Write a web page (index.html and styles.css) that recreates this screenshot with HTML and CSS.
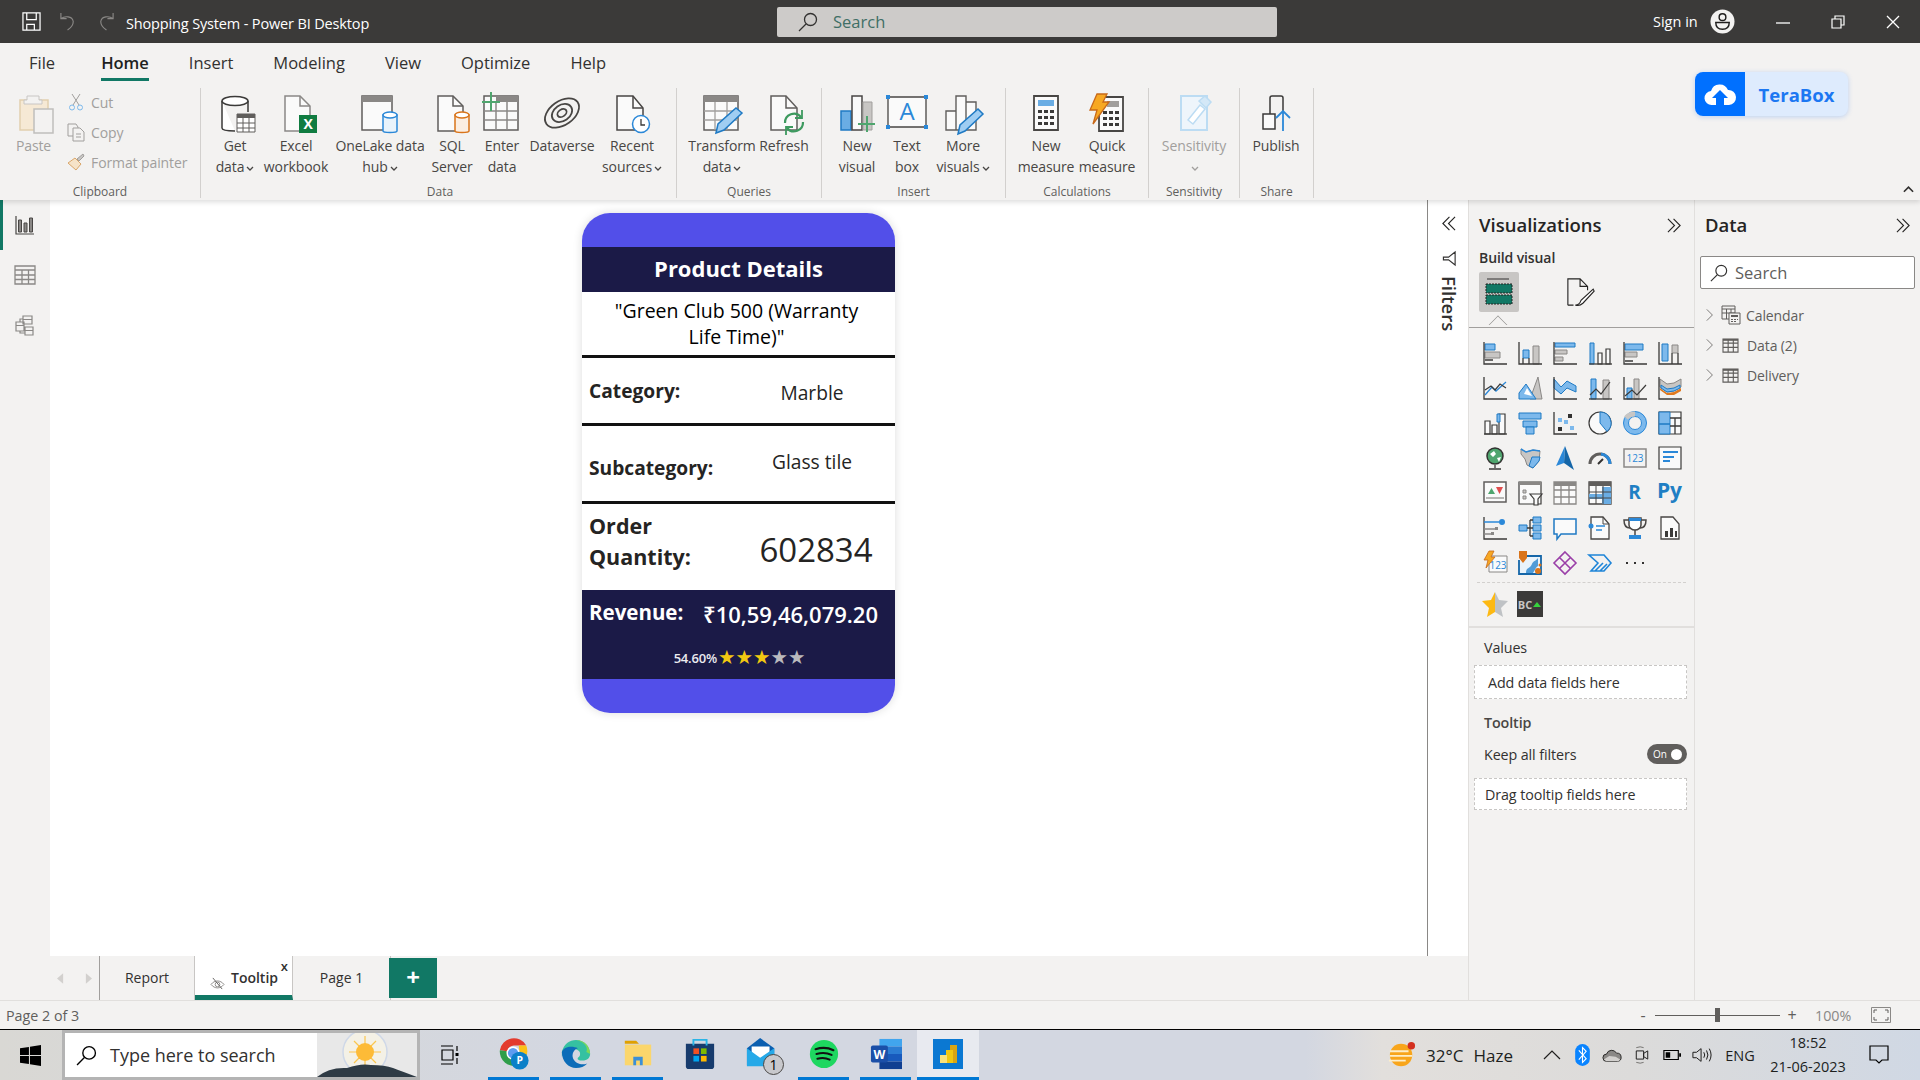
FILE: index.html
```html
<!DOCTYPE html>
<html lang="en">
<head>
    <meta charset="UTF-8">
    <meta name="viewport" content="width=device-width, initial-scale=1.0">
    <title>Shopping System - Power BI Desktop</title>
    <link rel="stylesheet" href="styles.css">
</head>
<body>
    <svg class="defs" width="0" height="0">
        <symbol id="i-caret" viewBox="0 0 8 6"><path d="M1 1l3 3 3-3" fill="none" stroke="currentColor" stroke-width="1.3"/></symbol>
        <symbol id="i-dbl" viewBox="0 0 16 16"><path d="M1 1l7 7-7 7M7 1l7 7-7 7" fill="none" stroke="#252423" stroke-width="1.2"/></symbol>
        <symbol id="i-right" viewBox="0 0 10 16"><path d="M1 1l7 7-7 7" fill="none" stroke="#605e5c" stroke-width="1"/></symbol>
        <symbol id="i-search" viewBox="0 0 20 20"><circle cx="12.5" cy="7.5" r="6" fill="none" stroke="currentColor" stroke-width="1.3"/><path d="M8 12l-7 7" stroke="currentColor" stroke-width="1.3"/></symbol>
        <symbol id="i-table" viewBox="0 0 18 16"><path d="M1 1h16v14H1zM1 5.500h16M1 10h16M6.500 1v14M12 1v14" fill="none" stroke="#605e5c" stroke-width="1.200"/><path d="M1 1h16v2H1z" fill="#605e5c"/></symbol>
    </svg>

    <header class="titlebar">
        <div class="quick">
            <svg class="quick-icon" viewBox="0 0 20 20"><path d="M1 1h18v18H1zM5 1v7h10V1M5 19v-6h8v6" fill="none" stroke="#fff" stroke-width="1.300"/></svg>
            <svg class="quick-icon" viewBox="0 0 20 20"><path d="M2 1v6h6M2 7c4-3 12-3 13 3 0 4-3 7-6 9" fill="none" stroke="#8a8886" stroke-width="1.200"/></svg>
            <svg class="quick-icon" viewBox="0 0 20 20"><path d="M18 1v6h-6M18 7c-4-3-12-3-13 3 0 4 3 7 6 9" fill="none" stroke="#8a8886" stroke-width="1.200"/></svg>
        </div>
        <div class="app-title">Shopping System - Power BI Desktop</div>
        <div class="top-search">
            <svg class="top-search-icon"><use href="#i-search"/></svg>
            <span>Search</span>
        </div>
        <div class="signin">Sign in</div>
        <svg class="avatar" viewBox="0 0 26 26"><circle cx="13" cy="13" r="12.500" fill="#f3f2f1"/><circle cx="13" cy="8.500" r="3.500" fill="none" stroke="#201f1e" stroke-width="1.500"/><path d="M6 14h14c0 5-3 7-7 7s-7-2-7-7z" fill="none" stroke="#201f1e" stroke-width="1.500"/></svg>
        <div class="winbtns">
            <svg class="winbtn" viewBox="0 0 14 14"><path d="M0 8h14" stroke="#fff" stroke-width="1.300"/></svg>
            <svg class="winbtn" viewBox="0 0 14 14"><path d="M1 4h9v9H1zM4 4V1h9v9h-3" fill="none" stroke="#fff" stroke-width="1.200"/></svg>
            <svg class="winbtn" viewBox="0 0 14 14"><path d="M1 1l12 12M13 1L1 13" stroke="#fff" stroke-width="1.300"/></svg>
        </div>
    </header>

    <section class="ribbon">
        <nav class="tabs">
            <span>File</span>
            <span class="tab-active">Home</span>
            <span>Insert</span>
            <span>Modeling</span>
            <span>View</span>
            <span>Optimize</span>
            <span>Help</span>
        </nav>
        <div class="groups">
            <div class="group g-clip">
                <div class="items">
                    <div class="item disabled">
                        <svg class="rb-icon" viewBox="0 0 40 40"><path d="M6 6h28v30H6z" fill="#f6e9d5" stroke="#e2cfae" stroke-width="1.500"/><path d="M13 6V2h12v4h3v4H10V6z" fill="#f3f2f1" stroke="#c8c6c4"/><path d="M20 15h19v24H20z" fill="#f3f2f1" stroke="#c0bebc" stroke-width="1.500"/></svg>
                        <span>Paste</span>
                    </div>
                    <div class="stack disabled">
                        <div class="stack-row"><svg class="stack-icon" viewBox="0 0 18 18"><path d="M5 1l7 11M13 1L6 12" stroke="#a19f9d" fill="none"/><circle cx="5" cy="14.500" r="2.500" fill="none" stroke="#7db9ec"/><circle cx="13" cy="14.500" r="2.500" fill="none" stroke="#7db9ec"/></svg>Cut</div>
                        <div class="stack-row"><svg class="stack-icon" viewBox="0 0 18 18"><path d="M1 1h8l2 3v9H1z" fill="none" stroke="#a19f9d"/><path d="M6 5h7l4 4v9H6z" fill="#f3f2f1" stroke="#a19f9d"/><path d="M9 11h5M9 14h5" stroke="#a19f9d"/></svg>Copy</div>
                        <div class="stack-row"><svg class="stack-icon" viewBox="0 0 18 18"><path d="M1 10l7-5 6 6-5 6z" fill="#f6e3c8" stroke="#d9a66a"/><path d="M10 6l6-5 1 2-5 5z" fill="#c8c6c4" stroke="#a19f9d"/></svg>Format painter</div>
                    </div>
                </div>
                <div class="group-name">Clipboard</div>
            </div>

            <div class="group g-data">
                <div class="items">
                    <div class="item">
                        <svg class="rb-icon" viewBox="0 0 40 40"><path d="M7 7v27c0 2 5 3 13 3M33 7v11" fill="#fff" stroke="#3b3a39" stroke-width="1.500"/><ellipse cx="20" cy="7" rx="13" ry="4.500" fill="#fff" stroke="#3b3a39" stroke-width="1.500"/><path d="M22 20h18v18H22z" fill="#fff" stroke="#605e5c"/><path d="M22 20h18v4H22z" fill="#605e5c"/><path d="M28 24v14M34 24v14M22 29h18M22 34h18" stroke="#605e5c"/></svg>
                        <span>Get<br>data<svg class="caret"><use href="#i-caret"/></svg></span>
                    </div>
                    <div class="item">
                        <svg class="rb-icon" viewBox="0 0 40 40"><path d="M9 2h15l10 10v25H9z" fill="#fafafa" stroke="#8a8886" stroke-width="1.500"/><path d="M24 2v10h10" fill="none" stroke="#8a8886" stroke-width="1.500"/><rect x="23" y="21" width="18" height="18" fill="#107c41"/><text x="32" y="35" class="x-mark">X</text></svg>
                        <span>Excel<br>workbook</span>
                    </div>
                    <div class="item">
                        <svg class="rb-icon" viewBox="0 0 40 40"><path d="M2 2h30v34H2z" fill="#fafafa" stroke="#605e5c" stroke-width="1.500"/><path d="M2 2h30v6H2z" fill="#8a8886"/><path d="M23 21v16c0 2 14 2 14 0V21z" fill="#e9f3fb" stroke="#2b88d8" stroke-width="1.500"/><ellipse cx="30" cy="21" rx="7" ry="3" fill="#fff" stroke="#2b88d8" stroke-width="1.500"/></svg>
                        <span>OneLake data<br>hub<svg class="caret"><use href="#i-caret"/></svg></span>
                    </div>
                    <div class="item">
                        <svg class="rb-icon" viewBox="0 0 40 40"><path d="M6 2h15l10 10v25H6z" fill="#fafafa" stroke="#605e5c" stroke-width="1.500"/><path d="M21 2v10h10" fill="none" stroke="#605e5c" stroke-width="1.500"/><path d="M23 21v16c0 2 14 2 14 0V21z" fill="#fbeee2" stroke="#d9741a" stroke-width="1.500"/><ellipse cx="30" cy="21" rx="7" ry="3" fill="#fff" stroke="#d9741a" stroke-width="1.500"/></svg>
                        <span>SQL<br>Server</span>
                    </div>
                    <div class="item">
                        <svg class="rb-icon" viewBox="0 0 40 40"><path d="M2 2h34v34H2z" fill="#fafafa" stroke="#605e5c" stroke-width="1.500"/><path d="M14 2h22v6H14z" fill="#8a8886"/><path d="M14 8v28M25 8v28M2 17h34M2 26h34" stroke="#8a8886" stroke-width="1.500"/><path d="M9-2v19M0 8h18" stroke="#4fa56e" stroke-width="2"/></svg>
                        <span>Enter<br>data</span>
                    </div>
                    <div class="item">
                        <svg class="rb-icon" viewBox="0 0 40 40"><g fill="none" stroke="#484644" stroke-width="1.800" transform="rotate(-35 20 19)"><ellipse cx="20" cy="19" rx="19" ry="12"/><ellipse cx="20" cy="19" rx="11" ry="8"/><ellipse cx="20" cy="19" rx="5" ry="3.500"/></g></svg>
                        <span>Dataverse</span>
                    </div>
                    <div class="item">
                        <svg class="rb-icon" viewBox="0 0 40 40"><path d="M5 2h16l10 12v22H5z" fill="#fafafa" stroke="#484644" stroke-width="1.500"/><path d="M21 2v12h10" fill="none" stroke="#484644" stroke-width="1.500"/><circle cx="29" cy="30" r="8.500" fill="#fff" stroke="#2b88d8" stroke-width="1.500"/><path d="M29 25v6h4" fill="none" stroke="#3b3a39" stroke-width="1.300"/></svg>
                        <span>Recent<br>sources<svg class="caret"><use href="#i-caret"/></svg></span>
                    </div>
                </div>
                <div class="group-name">Data</div>
            </div>

            <div class="group g-queries">
                <div class="items">
                    <div class="item">
                        <svg class="rb-icon" viewBox="0 0 40 40"><path d="M2 2h34v34H2z" fill="#fafafa" stroke="#605e5c" stroke-width="1.500"/><path d="M2 2h34v6H2z" fill="#8a8886"/><path d="M13 8v28M25 8v28M2 17h34M2 26h34" stroke="#a19f9d" stroke-width="1.300"/><path d="M14 39l2-9 18-16 6 5-18 17z" fill="#9fcdf2" stroke="#1f7ac4" stroke-width="1.500"/></svg>
                        <span>Transform<br>data<svg class="caret"><use href="#i-caret"/></svg></span>
                    </div>
                    <div class="item">
                        <svg class="rb-icon" viewBox="0 0 40 40"><path d="M7 2h15l11 12v22H7z" fill="#fafafa" stroke="#605e5c" stroke-width="1.500"/><path d="M22 2v12h11" fill="none" stroke="#605e5c" stroke-width="1.500"/><path d="M21 29a9 9 0 0 1 16-6M39 28a9 9 0 0 1-16 6" fill="none" stroke="#3d9a5f" stroke-width="2.200"/><path d="M38 16v8h-7M22 41v-8h7" fill="none" stroke="#3d9a5f" stroke-width="1.800"/></svg>
                        <span>Refresh</span>
                    </div>
                </div>
                <div class="group-name">Queries</div>
            </div>

            <div class="group g-insert">
                <div class="items">
                    <div class="item">
                        <svg class="rb-icon" viewBox="0 0 40 40"><path d="M4 17h10v19H4z" fill="#6aade4" stroke="#1f7ac4" stroke-width="1.500"/><path d="M15 2h10v34H15z" fill="#fafafa" stroke="#484644" stroke-width="1.500"/><path d="M26 8h9v28h-9z" fill="#c8c6c4" stroke="#a19f9d"/><path d="M30 22v16M21 30h17" stroke="#4fa56e" stroke-width="2"/></svg>
                        <span>New<br>visual</span>
                    </div>
                    <div class="item">
                        <svg class="rb-icon" viewBox="0 0 40 40"><path d="M1 3h38v30H1z" fill="#fafafa" stroke="#484644" stroke-width="1.300"/><path d="M-1 1h4v4h-4zM37 1h4v4h-4zM-1 31h4v4h-4zM37 31h4v4h-4z" fill="#2b88d8"/><text x="20" y="26" class="a-mark">A</text></svg>
                        <span>Text<br>box</span>
                    </div>
                    <div class="item">
                        <svg class="rb-icon" viewBox="0 0 40 40"><path d="M3 17h10v19H3zM13 2h10v34H13zM23 8h10v28H23z" fill="#fafafa" stroke="#605e5c" stroke-width="1.400"/><path d="M15 40l2-9 18-16 5 5-18 17z" fill="#9fcdf2" stroke="#1f7ac4" stroke-width="1.500"/></svg>
                        <span>More<br>visuals<svg class="caret"><use href="#i-caret"/></svg></span>
                    </div>
                </div>
                <div class="group-name">Insert</div>
            </div>

            <div class="group g-calc">
                <div class="items">
                    <div class="item">
                        <svg class="rb-icon" viewBox="0 0 40 40"><path d="M8 2h24v34H8z" fill="#fafafa" stroke="#484644" stroke-width="1.800"/><path d="M12 6h16v6H12z" fill="#6aade4"/><path d="M12 16h4v3h-4zM18 16h4v3h-4zM24 16h4v3h-4zM12 22h4v3h-4zM18 22h4v3h-4zM24 22h4v3h-4zM12 28h4v3h-4zM18 28h4v3h-4zM24 28h4v3h-4z" fill="#3b3a39"/></svg>
                        <span>New<br>measure</span>
                    </div>
                    <div class="item">
                        <svg class="rb-icon" viewBox="0 0 40 40"><path d="M12 3h24v34H12z" fill="#fafafa" stroke="#484644" stroke-width="1.800"/><path d="M20 7h12v6H20z" fill="#a19f9d"/><path d="M16 17h4v3h-4zM22 17h4v3h-4zM28 17h4v3h-4zM16 23h4v3h-4zM22 23h4v3h-4zM28 23h4v3h-4zM16 29h4v3h-4zM22 29h4v3h-4zM28 29h4v3h-4z" fill="#3b3a39"/><path d="M10 0h10l-4 8h6L6 30l4-14H3z" fill="#f7a823" stroke="#c8691a" stroke-width="1.300"/></svg>
                        <span>Quick<br>measure</span>
                    </div>
                </div>
                <div class="group-name">Calculations</div>
            </div>

            <div class="group g-sens">
                <div class="items">
                    <div class="item disabled">
                        <svg class="rb-icon" viewBox="0 0 40 40"><path d="M7 2h26v34H7z" fill="#eef5fb" stroke="#bcdcf3" stroke-width="2"/><path d="M14 26l12-15 5 4-12 15z" fill="#fff" stroke="#bcdcf3" stroke-width="1.500"/><path d="M25 7l6-5 6 6-5 6z" fill="#d4e8f7" stroke="#bcdcf3" stroke-width="1.500"/></svg>
                        <span>Sensitivity<br><svg class="caret"><use href="#i-caret"/></svg></span>
                    </div>
                </div>
                <div class="group-name">Sensitivity</div>
            </div>

            <div class="group g-share">
                <div class="items">
                    <div class="item">
                        <svg class="rb-icon" viewBox="0 0 40 40"><path d="M7 20h12v15H7z" fill="#fafafa" stroke="#3b3a39" stroke-width="1.500"/><path d="M14 20V4q0-2 2-2h9q2 0 2 2v13" fill="none" stroke="#3b3a39" stroke-width="1.500"/><path d="M27 37V17M20 24l7-7 7 7" fill="none" stroke="#2b88d8" stroke-width="1.800"/></svg>
                        <span>Publish</span>
                    </div>
                </div>
                <div class="group-name">Share</div>
            </div>
        </div>

        <div class="terabox">
            <div class="terabox-icon">
                <svg viewBox="0 0 32 24" width="32" height="24"><path d="M8 23a7 7 0 0 1-1-14 9 9 0 0 1 17-1 7.500 7.500 0 0 1 1 15h-5v-7h4l-8-8-8 8h4v7z" fill="#fff"/></svg>
            </div>
            <div class="terabox-name">TeraBox</div>
        </div>
        <svg class="collapse" viewBox="0 0 12 8"><path d="M1 7l5-5 5 5" fill="none" stroke="#323130" stroke-width="1.800"/></svg>
    </section>

    <main class="workspace">
        <div class="report">
            <div class="report-top">
                <aside class="rail">
                    <div class="rail-btn rail-active">
                        <svg class="rail-icon" viewBox="0 0 20 20"><path d="M1 1v18h18" fill="none" stroke="#484644" stroke-width="1.200"/><path d="M3.500 5h3v12h-3zM9 8h3v9H9zM14.500 3h3v14h-3z" fill="#8a8886" stroke="#484644"/></svg>
                    </div>
                    <div class="rail-btn">
                        <svg class="rail-icon" viewBox="0 0 20 20"><path d="M0 1h20v18H0zM0 5h20M0 10h20M0 14.500h20M7 5v14M13.500 5v14" fill="none" stroke="#8a8886" stroke-width="1.300"/></svg>
                    </div>
                    <div class="rail-btn">
                        <svg class="rail-icon" viewBox="0 0 20 20"><path d="M8 1h9v8H8zM8 4.500h9M1 7h8v9H1zM1 10.500h8M10 12h8v8h-8zM10 15.500h8M5 7V4h3M5 16v2h5" fill="none" stroke="#8a8886" stroke-width="1.200"/></svg>
                    </div>
                </aside>
                <div class="canvas">
                    <article class="card">
                        <div class="card-band"></div>
                        <div class="card-title">Product Details</div>
                        <div class="card-name">"Green Club 500 (Warranty<br>Life Time)"</div>
                        <div class="card-row row-cat">
                            <div class="row-label">Category:</div>
                            <div class="row-value">Marble</div>
                        </div>
                        <div class="card-row row-sub">
                            <div class="row-label">Subcategory:</div>
                            <div class="row-value">Glass tile</div>
                        </div>
                        <div class="card-row row-qty">
                            <div class="row-label">Order<br>Quantity:</div>
                            <div class="row-value">602834</div>
                        </div>
                        <div class="card-revenue">
                            <div class="revenue-line">
                                <span class="revenue-label">Revenue:</span>
                                <span class="revenue-value">₹10,59,46,079.20</span>
                            </div>
                            <div class="rating">
                                <span>54.60%</span>
                                <span class="stars">★★★<span class="stars-off">★★</span></span>
                            </div>
                        </div>
                        <div class="card-band"></div>
                    </article>
                </div>
                <aside class="filters">
                    <svg class="filters-chev"><use href="#i-dbl"/></svg>
                    <svg class="filters-funnel" viewBox="0 0 16 16"><path d="M14 1v14L7 9.500H1.500V6.500H7z" fill="none" stroke="#323130" stroke-width="1.200"/></svg>
                    <div class="filters-label">Filters</div>
                </aside>
            </div>
            <div class="pagebar">
                <div class="page-arrows">
                    <svg class="page-arrow" viewBox="0 0 8 12"><path d="M7 0v12L0 6z" fill="#d2d0ce"/></svg>
                    <svg class="page-arrow" viewBox="0 0 8 12"><path d="M1 0v12l7-6z" fill="#d2d0ce"/></svg>
                </div>
                <div class="page-tab">Report</div>
                <div class="page-tab page-active">
                    <svg class="eye-off" viewBox="0 0 16 14"><path d="M1 8c4-5 10-5 14 0-4 5-10 5-14 0z" fill="none" stroke="#8a8886"/><circle cx="8" cy="8" r="2.500" fill="none" stroke="#8a8886"/><path d="M3 1l10 12" stroke="#605e5c"/></svg>
                    <span>Tooltip</span>
                    <span class="page-close">x</span>
                </div>
                <div class="page-tab">Page 1</div>
                <div class="page-add">+</div>
            </div>
        </div>

        <aside class="viz-pane">
            <div class="pane-head">
                <span>Visualizations</span>
                <svg class="pane-chev"><use href="#i-dbl"/></svg>
            </div>
            <div class="build-label">Build visual</div>
            <div class="build-tabs">
                <div class="build-active">
                    <svg viewBox="0 0 28 28" width="28" height="28"><path d="M2 1h22" stroke="#323130"/><path d="M1 6h26v9H1zM1 17h26v9H1z" fill="#117865" stroke="#252423" stroke-dasharray="2 1"/></svg>
                </div>
                <svg class="build-format" viewBox="0 0 32 32"><path d="M2 30V2h13l8 8v4M15 2v8h8M2 30h6" fill="none" stroke="#252423" stroke-width="1.200"/><path d="M10 30c4 0 5-2 6-5l13-12 1 2-12 13c-2 2-5 3-8 2z" fill="#fff" stroke="#252423" stroke-width="1.200"/></svg>
            </div>
            <div class="build-rule"></div>

            <div class="viz-grid">
                <svg class="viz" viewBox="0 0 24 24"><path class="gr" d="M2 11h15v6H2z"/><path class="bl" d="M2 3h10v6H2z"/><path class="ax" d="M1 1v22h23M2 19h8"/></svg>
                <svg class="viz" viewBox="0 0 24 24"><path class="gr" d="M15 5h6v18h-6z"/><path class="bl" d="M5 9h6v8H5z"/><path class="ax" d="M1 1v22h23M5 17v6h6v-6"/></svg>
                <svg class="viz" viewBox="0 0 24 24"><path class="bl" d="M2 2h20v4H2z"/><path class="gr" d="M2 9h12v4H2zM2 16h8v4H2z"/><path class="ax" d="M1 1v22h23"/></svg>
                <svg class="viz" viewBox="0 0 24 24"><path class="bl" d="M2 2h4v21H2z"/><path class="wh" d="M10 12h4v11h-4zM18 8h4v15h-4z"/><path class="ax" d="M1 23h23"/></svg>
                <svg class="viz" viewBox="0 0 24 24"><path class="bl" d="M2 3h18v6H2z"/><path class="gr" d="M2 11h12v5H2z"/><path class="ax" d="M1 1v22h23M2 20h8"/></svg>
                <svg class="viz" viewBox="0 0 24 24"><path class="bl" d="M4 3h6v17H4z"/><path class="gr" d="M14 4h6v8h-6z"/><path class="ax" d="M1 1v22h23M14 12v11h6V12"/></svg>

                <svg class="viz" viewBox="0 0 24 24"><path class="ax" d="M1 1v22h23"/><path class="lineb" d="M2 19l7-8 4 4 10-9"/><path class="lined" d="M2 14l6-4 4 4 5-6 6 4"/></svg>
                <svg class="viz" viewBox="0 0 24 24"><path class="gr" d="M12 23l8-22 4 22z"/><path class="bl" d="M1 23v-6l7-9 10 15z"/><path d="M6 18l3-6 5 8z" fill="#fff"/></svg>
                <svg class="viz" viewBox="0 0 24 24"><path class="bl" d="M1 3l7 8 6-6 9 5v6l-9-4-6 6-7-6z"/><path class="ax" d="M1 1v22h23"/></svg>
                <svg class="viz" viewBox="0 0 24 24"><path class="bl" d="M3 3h5v20H3z"/><path class="gr" d="M15 4h6v19h-6z"/><path class="ax" d="M1 23h23"/><path class="lined" d="M2 19l6-6 5 5 9-12"/></svg>
                <svg class="viz" viewBox="0 0 24 24"><path class="bl" d="M4 12h5v11H4z"/><path class="gr" d="M11 3h5v20h-5z"/><path class="ax" d="M1 1v22h23"/><path class="lined" d="M2 20l7-6 5 5 9-10"/></svg>
                <svg class="viz" viewBox="0 0 24 24"><path class="gr" d="M2 3l7 5 7-1 7-4v8l-7 4-7 1-7-5z"/><path d="M2 12l7 5 7-1 7-4v3l-7 4H9l-7-5z" fill="#e0791f"/><path class="bl" d="M3 9l6 4 7-1 6-3v3l-6 3-7 1-6-4z"/><path class="ax" d="M1 1v22h23"/></svg>

                <svg class="viz" viewBox="0 0 24 24"><path class="wh" d="M2 10h5v13H2zM9 14h5v9H9zM16 3h6v20h-6z"/><path class="bl" d="M14 3h3v8h-3z"/><path class="ax" d="M1 23h23"/></svg>
                <svg class="viz" viewBox="0 0 24 24"><path class="bl" d="M1 2h22v6H1z"/><path class="bl" d="M5 10h14v6H5z"/><path class="bl" d="M8 16h8v7H8z"/></svg>
                <svg class="viz" viewBox="0 0 24 24"><path class="ax" d="M1 1v22h23"/><path d="M5 16h4v4H5zM15 3h4v4h-4z" fill="#323130"/><path d="M5 7h4v4H5zM11 9h4v4h-4zM17 15h4v4h-4z" fill="#7db9ec"/></svg>
                <svg class="viz" viewBox="0 0 24 24"><circle class="wh" cx="12" cy="12" r="11"/><path class="bl" d="M12 1a11 11 0 0 1 7 19.500L12 12z"/></svg>
                <svg class="viz" viewBox="0 0 24 24"><circle cx="12" cy="12" r="9" fill="none" stroke="#7db9ec" stroke-width="5"/><circle cx="12" cy="12" r="11.500" fill="none" stroke="#2b88d8"/><circle cx="12" cy="12" r="6.500" fill="#f3f2f1" stroke="#2b88d8"/><path d="M3 7a11 11 0 0 1 9-4" fill="none" stroke="#c8c6c4" stroke-width="5"/></svg>
                <svg class="viz" viewBox="0 0 24 24"><path class="wh" d="M1 1h22v22H1z"/><path class="bl" d="M1 1h11v12H1zM1 13h11v10H1z"/><path class="ax" d="M12 7h11M17 7v16M12 15h11"/></svg>

                <svg class="viz" viewBox="0 0 24 24"><circle cx="12" cy="10" r="8" fill="#4fa56e" stroke="#323130" stroke-width="1.500"/><path d="M7 8l4-3 2 3-3 3zM14 12l4-1-2 5z" fill="#fff"/><path class="ax" d="M12 19v3M6 23h12"/></svg>
                <svg class="viz" viewBox="0 0 24 24"><path class="gr" d="M3 3l5 3 7-2 7 1-1 10-6 7-6-3-2-6-4-5z"/><path class="bl" d="M14 11h8l-1 4-6 7-4-2z"/><path d="M3 3l5 3 7-2 7 1" fill="none" stroke="#2b88d8" stroke-width="1.500"/></svg>
                <svg class="viz" viewBox="0 0 24 24"><path d="M12 0L3 20l8-3z" fill="#2b88d8"/><path d="M12 0l9 24-10-7z" fill="#1566a8"/></svg>
                <svg class="viz" viewBox="0 0 24 24"><path d="M2 18a10 10 0 0 1 20 0" fill="none" stroke="#605e5c" stroke-width="3"/><path d="M13 8a10 10 0 0 1 9 10" fill="none" stroke="#2b88d8" stroke-width="3"/><path d="M10 18l5-5" stroke="#323130" stroke-width="2"/></svg>
                <svg class="viz" viewBox="0 0 24 24"><path d="M1 3h22v18H1z" fill="#f3f2f1" stroke="#8a8886" stroke-width="1.500"/><text x="12" y="16" class="num-mark">123</text></svg>
                <svg class="viz" viewBox="0 0 24 24"><path class="wh" d="M1 1h22v22H1z"/><path d="M5 6h15M5 11h11M5 15h7" stroke="#2b88d8" stroke-width="2"/></svg>

                <svg class="viz" viewBox="0 0 24 24"><path d="M1 1h22v20H1z" fill="#fafafa" stroke="#605e5c" stroke-width="1.500"/><path d="M5 13l3.500-6 3.500 6z" fill="#4fa56e"/><path d="M13 6h7l-3.500 7z" fill="#e04e4e"/><path d="M3 17h18" stroke="#a19f9d" stroke-width="1.500"/></svg>
                <svg class="viz" viewBox="0 0 24 24"><path class="wh" d="M1 1h22v22H1z"/><path d="M1 1h22v3H1z" fill="#8a8886"/><path class="gr" d="M5 9h3v3H5zM5 15h3v3H5z"/><path class="wh" d="M12 13h12l-4 5v6h-4v-6z"/></svg>
                <svg class="viz" viewBox="0 0 24 24"><path d="M1 1h22v22H1zM1 9h22M1 16h22M8 5v18M16 5v18" fill="#fafafa" stroke="#8a8886" stroke-width="1.300"/><path d="M1 1h22v4H1z" fill="#8a8886"/></svg>
                <svg class="viz" viewBox="0 0 24 24"><path d="M1 1h22v22H1z" fill="#fafafa" stroke="#484644" stroke-width="1.300"/><path d="M14 6h9v17h-9zM1 13h13v5H1z" fill="#6aade4"/><path d="M1 1h22v4H1z" fill="#605e5c"/><path d="M1 11h22M1 17h22M8 5v18M15 5v18" stroke="#484644"/></svg>
                <div class="viz-letter viz-r">R</div>
                <div class="viz-letter viz-py">Py</div>

                <svg class="viz" viewBox="0 0 24 24"><path class="ax" d="M1 1v22h23"/><path d="M1 6h15" stroke="#2b88d8" stroke-width="1.500"/><circle cx="19" cy="6" r="3" fill="#2b88d8"/><path d="M1 13h11M1 18h7" stroke="#8a8886" stroke-width="1.500"/><path d="M12 11h3v3h-3zM8 16h3v3H8z" fill="#8a8886"/></svg>
                <svg class="viz" viewBox="0 0 24 24"><path class="bl" d="M1 9h8v6H1zM15 1h8v6h-8zM15 9h8v6h-8zM15 17h8v6h-8z"/><path class="ax" d="M9 12h6M12 4v16M12 4h3M12 20h3"/></svg>
                <svg class="viz" viewBox="0 0 24 24"><path d="M1 3h22v15H8l-4 5v-5H1z" fill="#fafafa" stroke="#1f7ac4" stroke-width="1.500"/></svg>
                <svg class="viz" viewBox="0 0 24 24"><path d="M3 1h12l6 7v15H3z" fill="#fafafa" stroke="#484644" stroke-width="1.300"/><path d="M15 1v7h6" fill="none" stroke="#484644"/><circle cx="3" cy="10" r="2.500" fill="#2b88d8"/><path d="M8 10h9M8 14h6" stroke="#2b88d8" stroke-width="1.300"/></svg>
                <svg class="viz" viewBox="0 0 24 24"><path d="M6 2h12v7c0 3-3 5-6 5s-6-2-6-5z" fill="#fff" stroke="#484644" stroke-width="1.500"/><path d="M6 2h12v3H6z" fill="#2b88d8"/><path d="M6 4H1c0 5 2 8 6 8M18 4h5c0 5-2 8-6 8M12 14v5" fill="none" stroke="#484644" stroke-width="1.500"/><path d="M6 19h12v4H6z" fill="#2b88d8"/></svg>
                <svg class="viz" viewBox="0 0 24 24"><path d="M3 1h12l6 7v15H3z" fill="#fafafa" stroke="#484644" stroke-width="1.300"/><path d="M7 15h3v6H7zM12 12h3v9h-3zM17 15h2v6h-2z" fill="#3b3a39"/></svg>

                <svg class="viz" viewBox="0 0 24 24"><path d="M6 5h18v16H6z" fill="#fafafa" stroke="#8a8886"/><text x="15" y="18" class="num-mark">123</text><path d="M6 0h5L8 6h4L3 17l2-8H1z" fill="#f7a823" stroke="#c8691a" stroke-width=".8"/></svg>
                <svg class="viz" viewBox="0 0 24 24"><path d="M4 5h19v18H1V9" fill="#e9f3fb" stroke="#1566a8" stroke-width="1.800"/><path d="M8 22c0-6 4-4 6-9 1-3 4-3 6-6v8c-2 1-3 4-5 7z" fill="#4f9bd8"/><path d="M1 0h8v7l-4 5-4-5z" fill="#d9741a"/><circle cx="20" cy="20" r="3" fill="#d9741a"/><circle cx="22" cy="14" r="1.500" fill="#d9741a"/></svg>
                <svg class="viz" viewBox="0 0 24 24"><path d="M12 1l11 11-11 11L1 12zM7 7l10 10M17 7L7 17" fill="none" stroke="#9a3fa8" stroke-width="1.600"/></svg>
                <svg class="viz" viewBox="0 0 24 24"><path d="M1 4h15l7 8-7 8H3l7-8zM7 20l8-8M12 20l7-7" fill="none" stroke="#1f85d8" stroke-width="1.600"/></svg>
                <svg class="viz" viewBox="0 0 24 24"><path d="M3 12h2M11 12h2M19 12h2" stroke="#323130" stroke-width="2"/></svg>
                <div></div>
            </div>
            <div class="viz-rule"></div>
            <div class="viz-grid">
                <svg class="viz viz-custom" viewBox="0 0 26 26"><path d="M13 1l4 8 9 1-7 7 2 9-8-5z" fill="#bfc2c5"/><path d="M13 1L9 9l-9 1 7 7-2 9 8-5z" fill="#fdb913"/></svg>
                <svg class="viz viz-custom" viewBox="0 0 26 26"><rect width="26" height="26" fill="#3b3a39"/><text x="8" y="18" class="abc-mark">BC</text><path d="M16 16l4-5 4 5z" fill="#37d33c"/></svg>
            </div>

            <div class="well">
                <div class="well-title">Values</div>
                <div class="well-box well-values">Add data fields here</div>
                <div class="well-title well-tooltip">Tooltip</div>
                <div class="keep-row">
                    <span>Keep all filters</span>
                    <span class="toggle">On<i class="toggle-knob"></i></span>
                </div>
                <div class="well-box well-drag">Drag tooltip fields here</div>
            </div>
        </aside>

        <aside class="data-pane">
            <div class="pane-head">
                <span>Data</span>
                <svg class="pane-chev"><use href="#i-dbl"/></svg>
            </div>
            <div class="data-search">
                <svg class="data-search-icon"><use href="#i-search"/></svg>
                <span>Search</span>
            </div>
            <div class="tree">
                <div class="tree-row">
                    <svg class="tree-chev"><use href="#i-right"/></svg>
                    <svg class="tree-icon" viewBox="0 0 20 20"><path d="M1 1h13v13H1zM1 4h13M1 8h13M5.500 4v10M10 4v10" fill="none" stroke="#605e5c"/><path d="M8 8h11v11H8z" fill="#f3f2f1" stroke="#605e5c"/><path d="M10 10h7v2h-7zM10 14h2v1h-2zM13 14h2v1h-2zM16 14h1v1h-1zM10 16h2v1h-2zM13 16h2v1h-2z" fill="#605e5c"/></svg>
                    <span>Calendar</span>
                </div>
                <div class="tree-row">
                    <svg class="tree-chev"><use href="#i-right"/></svg>
                    <svg class="tree-icon tree-table"><use href="#i-table"/></svg>
                    <span>Data (2)</span>
                </div>
                <div class="tree-row">
                    <svg class="tree-chev"><use href="#i-right"/></svg>
                    <svg class="tree-icon tree-table"><use href="#i-table"/></svg>
                    <span>Delivery</span>
                </div>
            </div>
        </aside>
    </main>

    <footer class="statusbar">
        <span>Page 2 of 3</span>
        <div class="zoom">
            <span class="zoom-sign">-</span>
            <div class="zoom-track"><i class="zoom-thumb"></i></div>
            <span class="zoom-sign">+</span>
            <span class="zoom-pct">100%</span>
            <svg class="zoom-fit" viewBox="0 0 20 16"><path d="M.5.5h19v15H.500z" fill="none" stroke="#8a8886"/><path d="M3 6V3h3M14 3h3v3M17 10v3h-3M6 13H3v-3" fill="none" stroke="#605e5c"/></svg>
        </div>
    </footer>

    <div class="taskbar">
        <div class="start">
            <svg viewBox="0 0 20 20" width="21" height="21"><path d="M0 3l8.500-1.200V9.500H0zM9.500 1.600L20 0v9.500H9.500zM0 10.500h8.500v7.700L0 17zM9.500 10.500H20V20L9.500 18.400z" fill="#000"/></svg>
        </div>
        <div class="task-search">
            <svg class="task-search-icon"><use href="#i-search"/></svg>
            <span class="task-search-text">Type here to search</span>
            <div class="task-search-art">
                <svg viewBox="0 0 100 44" width="100" height="44"><circle cx="48" cy="19" r="22" fill="#f4f1e6" stroke="#cfd8e8" stroke-width="1.500"/><path d="M48 3v32M32 19h32M37 8l22 22M59 8L37 30" stroke="#fbc64e" stroke-width="1.200"/><circle cx="48" cy="19" r="9" fill="#fdbb37"/><path d="M0 44q12-10 30-9 14-5 24-3 14 0 22 3 8 3 24 9z" fill="#2f3b45"/></svg>
            </div>
        </div>
        <div class="taskview">
            <svg viewBox="0 0 20 20" width="20" height="20"><path d="M1 1h12M1 19h12M2 5h11v10H2zM17 1v5M17 13v6" fill="none" stroke="#000" stroke-width="1.200"/><path d="M15.500 8h3v3h-3z" fill="#000"/></svg>
        </div>
        <div class="apps">
            <div class="app app-open">
                <svg class="app-icon" viewBox="0 0 34 34"><path d="M2 13a15 15 0 0 1 28-5H17a7 7 0 0 0-7 6z" fill="#e33b2e"/><path d="M30 8a15 15 0 0 1-9 20l-4-8 6-4-1-8z" fill="#fbc116"/><path d="M2 13a15 15 0 0 0 19 16l-5-10-6-5z" fill="#2f9e4a"/><circle cx="16" cy="16" r="7" fill="#fff"/><circle cx="16" cy="16" r="5.500" fill="#5c9cf0"/><circle cx="23" cy="24" r="9.500" fill="#0b80c8"/><text x="23" y="28" class="p-mark">P</text></svg>
            </div>
            <div class="app app-open">
                <svg class="app-icon" viewBox="0 0 34 34"><path d="M2 15C4 6 10 2 17 2c9 0 15 7 15 15 0 4-3 7-8 7-4 0-6-1-5-3 2-1 3-3 2-6-2-4-10-5-15-1-2 1-3 3-4 6z" fill="#35c1a1"/><path d="M2 15c0 10 7 17 15 17 5 0 9-2 12-5-5 2-12 1-15-5-2-5 1-10 5-11C13 8 4 9 2 15z" fill="#0c6cb8"/><path d="M32 17c0-8-6-15-15-15 6 1 14 6 11 13z" fill="#7ed957"/></svg>
            </div>
            <div class="app app-open">
                <svg class="app-icon" viewBox="0 0 34 34"><path d="M3 3h12l3 3h-15z" fill="#e0a100"/><path d="M3 7h28v22H3z" fill="#fbd66c"/><path d="M12 29v-9h10v9h-3v-5h-4v5z" fill="#3c8fd6"/></svg>
            </div>
            <div class="app">
                <svg class="app-icon" viewBox="0 0 34 34"><path d="M2 6h30v24q0 3-3 3H5q-3 0-3-3z" fill="#173b6d"/><path d="M10 8V2h14v6" fill="none" stroke="#2bb4e6" stroke-width="2"/><path d="M10 11h6v6h-6z" fill="#f25022"/><path d="M18 11h6v6h-6z" fill="#7fba00"/><path d="M10 19h6v6h-6z" fill="#00a4ef"/><path d="M18 19h6v6h-6z" fill="#ffb900"/></svg>
            </div>
            <div class="app">
                <svg class="app-icon" viewBox="0 0 34 34"><path d="M1 11L15 0l15 11v18H1z" fill="#0b5fb0"/><path d="M6 9h19v11L15 25 6 20z" fill="#fff"/><path d="M1 11l14 10 15-10v19H1z" fill="#26a9e8"/></svg>
                <div class="app-badge">1</div>
            </div>
            <div class="app app-open">
                <svg class="app-icon" viewBox="0 0 34 34"><circle cx="17" cy="17" r="15" fill="#1ed760"/><path d="M8 12c6-2 13-2 19 1M9 17c5-1.500 11-1.500 16 1M10 22c4-1 9-1 13 1" fill="none" stroke="#111" stroke-width="2.200" stroke-linecap="round"/></svg>
            </div>
            <div class="app app-open">
                <svg class="app-icon" viewBox="0 0 34 34"><path d="M10 1h24v8H10z" fill="#41a5ee"/><path d="M10 9h24v8H10z" fill="#2b7cd3"/><path d="M10 17h24v8H10z" fill="#185abd"/><path d="M10 25h24v8H10z" fill="#103f91"/><rect x="1" y="8" width="18" height="18" rx="2" fill="#1b4fa8"/><text x="10" y="22" class="w-mark">W</text></svg>
            </div>
            <div class="app app-open app-active">
                <svg class="app-icon pbi-icon" viewBox="0 0 30 30"><rect width="30" height="30" fill="#0b78d2"/><path d="M17 6h7v18h-7z" fill="#d9a514"/><path d="M13 11h7v13h-7z" fill="#f2c811"/><path d="M7 16h7v8H7z" fill="#fae27a"/></svg>
            </div>
        </div>
        <div class="tray">
            <svg class="weather" viewBox="0 0 30 30"><circle cx="14" cy="15" r="12" fill="#f8a51b"/><path d="M2 11h20M2 16h24M1 21h18" stroke="#fdeec9" stroke-width="2"/><circle cx="25" cy="5" r="4" fill="#d32f1f"/></svg>
            <div class="temp"><span>32°C</span><span>Haze</span></div>
            <svg class="tray-icon" viewBox="0 0 18 18"><path d="M1 13l8-8 8 8" fill="none" stroke="#201f1e" stroke-width="1.200"/></svg>
            <svg class="tray-icon tray-bt" viewBox="0 0 16 24"><rect width="16" height="24" rx="8" fill="#0a84ff"/><path d="M4 7l8 9-4 4V4l4 4-8 9" fill="none" stroke="#fff" stroke-width="1.200"/></svg>
            <svg class="tray-icon tray-wide" viewBox="0 0 22 16"><path d="M5 15a4 4 0 0 1 0-8 6 6 0 0 1 11-1 4.500 4.500 0 0 1 1 9z" fill="#8a8886" stroke="#201f1e"/><path d="M2 13l6-4 7 1 5 3-2 2H5z" fill="#d2d0ce"/></svg>
            <svg class="tray-icon" viewBox="0 0 18 22"><path d="M2 6h9v10H2zM11 9l5-3v10l-5-3z" fill="none" stroke="#201f1e" stroke-width="1.200"/><path d="M2 2q5-2 9 0M2 20q5 2 9 0" fill="none" stroke="#605e5c"/></svg>
            <svg class="tray-icon" viewBox="0 0 20 12"><path d="M1 1h16v10H1z" fill="none" stroke="#000" stroke-width="1.300"/><path d="M3 3h5v6H3zM18 4h2v4h-2z" fill="#000"/></svg>
            <svg class="tray-icon tray-wide" viewBox="0 0 22 18"><path d="M1 6h4l5-4v14l-5-4H1zM13 6q2 3 0 6M16 4q3 5 0 10M19 2q4 7 0 14" fill="none" stroke="#201f1e" stroke-width="1.100"/></svg>
            <div class="tray-lang">ENG</div>
            <div class="clock"><span>18:52</span><span>21-06-2023</span></div>
            <svg class="tray-notify" viewBox="0 0 20 20"><path d="M1 1h18v14h-6l-3 3-3-3H1z" fill="none" stroke="#000" stroke-width="1.200"/></svg>
        </div>
    </div>
</body>
</html>
```

FILE: styles.css
```css
* {
    box-sizing: border-box;
}
html, body {
    margin: 0;
    padding: 0;
}
body {
    width: 1920px;
    height: 1080px;
    overflow: hidden;
    font-family: "Open Sans", "Noto Sans", sans-serif;
    color: #323130;
    background-color: #f3f2f1;
    display: flex;
    flex-direction: column;
}
.defs {
    position: absolute;
}
svg {
    overflow: visible;
    flex: none;
}

/* title bar */
.titlebar {
    height: 43px;
    flex: none;
    background-color: #3b3a39;
    color: #fff;
    display: flex;
    align-items: center;
    padding-left: 22px;
}
.quick {
    display: flex;
    gap: 18px;
}
.quick-icon {
    width: 19px;
    height: 19px;
}
.app-title {
    font-size: 14.5px;
    width: 651px;
    margin: 3px 0 0 11px;
    letter-spacing: -.15px;
    white-space: nowrap;
}
.top-search {
    width: 500px;
    height: 30px;
    border-radius: 2px;
    background-color: #cdcbc9;
    color: #3f6f66;
    font-size: 16.5px;
    display: flex;
    align-items: center;
    padding-left: 21px;
}
.top-search-icon {
    width: 20px;
    height: 20px;
    margin-right: 15px;
    color: #323130;
}
.signin {
    font-size: 14.5px;
    margin-left: 376px;
    width: 57px;
}
.avatar {
    width: 25px;
    height: 25px;
}
.winbtns {
    display: flex;
    margin-left: 41px;
    gap: 41px;
}
.winbtn {
    width: 14px;
    height: 14px;
}

/* ribbon */
.ribbon {
    height: 157px;
    flex: none;
    background-color: #f3f2f1;
    position: relative;
    z-index: 2;
    box-shadow: 0 2px 5px rgba(0, 0, 0, .14);
}
.tabs {
    height: 45px;
    padding: 0 0 0 29px;
    display: flex;
    gap: 40px;
    font-size: 16.500px;
    color: #323130;
}
.tabs span {
    height: 38px;
    line-height: 40px;
}
.tabs span:first-child {
    margin-right: 6px;
}
.tab-active {
    font-weight: 600;
    color: #201f1e;
    border-bottom: 3px solid #117865;
}
.groups {
    display: flex;
    height: 110px;
}
.group {
    height: 110px;
    border-right: 1px solid #d2d0ce;
    display: flex;
    flex-direction: column;
}
.g-clip { width: 201px; }
.g-data { width: 476px; padding-left: 3px; }
.g-queries { width: 145px; }
.g-insert { width: 184px; }
.g-calc { width: 143px; }
.g-sens { width: 91px; }
.g-share { width: 74px; }
.items {
    height: 94px;
    flex: none;
    display: grid;
    font-size: 14px;
    letter-spacing: -.1px;
    color: #484644;
}
.g-clip .items { grid-template-columns: 67px 134px; }
.g-data .items { grid-template-columns: 62px 60px 108px 36px 64px 56px 84px; }
.g-queries .items { grid-template-columns: 90px 34px; }
.g-insert .items { grid-template-columns: 70px 30px 82px; }
.g-calc .items { grid-template-columns: 80px 42px; }
.g-sens .items { grid-template-columns: 90px; }
.g-share .items { grid-template-columns: 72px; }
.item {
    justify-self: center;
    display: flex;
    flex-direction: column;
    align-items: center;
    padding-top: 6px;
    line-height: 21px;
    text-align: center;
    white-space: nowrap;
}
.rb-icon {
    width: 40px;
    height: 40px;
    margin-bottom: 1px;
}
.caret {
    width: 8px;
    height: 6px;
    margin-left: 2px;
}
.disabled {
    color: #a19f9d;
}
.stack {
    margin-top: -1px;
}
.stack-row {
    height: 30px;
    display: flex;
    align-items: center;
    gap: 6px;
    white-space: nowrap;
}
.stack-icon {
    width: 18px;
    height: 18px;
}
.group-name {
    font-size: 12px;
    line-height: 16px;
    margin-top: 2px;
    text-align: center;
    color: #605e5c;
}
.terabox {
    position: absolute;
    left: 1695px;
    top: 29px;
    width: 153px;
    height: 44px;
    display: flex;
    border-radius: 8px;
    overflow: hidden;
    background-color: #deebfd;
    box-shadow: 0 1px 5px rgba(30, 110, 240, .25);
}
.terabox-icon {
    width: 50px;
    background-color: #0070ff;
    display: flex;
    align-items: center;
    justify-content: center;
}
.terabox-name {
    flex: 1;
    text-align: center;
    line-height: 45px;
    font-size: 18.500px;
    font-weight: 700;
    color: #1c77f2;
}
.collapse {
    position: absolute;
    left: 1903px;
    top: 142px;
    width: 11px;
    height: 8px;
}

/* main area */
.workspace {
    height: 800px;
    flex: none;
    display: flex;
}
.report {
    width: 1468px;
    display: flex;
    flex-direction: column;
}
.report-top {
    height: 756px;
    display: flex;
}
.rail {
    width: 50px;
    background-color: #f3f2f1;
}
.rail-btn {
    height: 50px;
    display: flex;
    align-items: center;
    justify-content: center;
}
.rail-active {
    border-left: 3px solid #117865;
    padding-right: 3px;
}
.rail-icon {
    width: 20px;
    height: 20px;
}
.canvas {
    width: 1377px;
    background-color: #fff;
    padding: 13px 0 0 532px;
}
.filters {
    width: 41px;
    background-color: #fff;
    border-left: 1px solid #8a8886;
    display: flex;
    flex-direction: column;
    align-items: center;
    position: relative;
}
.filters-chev {
    width: 15px;
    height: 15px;
    margin-top: 16px;
    margin-left: 0;
    transform: scaleX(-1);
}
.filters-funnel {
    width: 15px;
    height: 15px;
    margin: 20px 0 0 3px;
}
.filters-label {
    writing-mode: vertical-rl;
    font-size: 18.500px;
    font-weight: 600;
    line-height: 20px;
    margin: 10px 0 0 1px;
    color: #323130;
}

/* product card */
.card {
    width: 313px;
    height: 500px;
    border-radius: 28px;
    overflow: hidden;
    background-color: #fff;
    box-shadow: 0 0 10px rgba(0, 0, 0, .14);
    display: flex;
    flex-direction: column;
    color: #252423;
}
.card-band {
    height: 34px;
    flex: none;
    background-color: #524fe9;
}
.card-title {
    height: 45px;
    flex: none;
    background-color: #1b1a47;
    color: #fff;
    font-size: 22px;
    font-weight: 700;
    text-align: center;
    line-height: 42px;
}
.card-name {
    height: 66px;
    flex: none;
    font-size: 19.500px;
    font-weight: 500;
    line-height: 26px;
    color: #000;
    text-align: center;
    padding: 6px 4px 0 0;
    border-bottom: 3px solid #111;
}
.card-row {
    flex: none;
    display: grid;
    grid-template-columns: 147px 166px;
    align-items: center;
    padding-left: 7px;
    font-size: 19.200px;
    border-bottom: 3px solid #111;
}
.row-label {
    font-weight: 700;
}
.row-value {
    text-align: center;
    margin-left: -14px;
}
.row-cat {
    height: 68px;
}
.row-cat .row-value {
    margin-top: 3px;
}
.row-sub {
    height: 78px;
}
.row-sub .row-label {
    margin-top: 8px;
}
.row-sub .row-value {
    margin-top: -4px;
}
.row-qty {
    height: 86px;
    border-bottom: 0;
    font-size: 21.500px;
}
.row-qty .row-label {
    line-height: 31px;
    margin-top: -12px;
}
.row-qty .row-value {
    font-size: 33px;
    margin-left: -6px;
    margin-top: 4px;
}
.card-revenue {
    height: 89px;
    flex: none;
    background-color: #1b1a47;
    color: #fff;
    padding: 8px 0 0 7px;
}
.revenue-line {
    display: flex;
    align-items: flex-start;
    justify-content: space-between;
    padding-right: 17px;
}
.revenue-label {
    font-size: 20.500px;
    font-weight: 700;
    line-height: 28px;
}
.revenue-value {
    font-size: 22px;
    font-weight: 600;
    line-height: 33px;
}
.rating {
    display: flex;
    align-items: center;
    justify-content: center;
    margin: 15px 0 0 -5px;
    font-size: 13px;
    font-weight: 600;
    letter-spacing: -.2px;
    color: #ebebf0;
}
.stars {
    color: #f2c811;
    font-size: 19.500px;
    line-height: 24px;
    letter-spacing: 0;
    margin-left: 1px;
    font-family: "DejaVu Sans", sans-serif;
}
.stars-off {
    color: #b9b9bd;
}

/* page tabs */
.pagebar {
    height: 44px;
    display: flex;
    font-size: 14px;
    background-color: #f3f2f1;
}
.page-arrows {
    width: 100px;
    border-right: 1px solid #a19f9d;
    display: flex;
    align-items: center;
    gap: 21px;
    padding: 0 0 0 57px;
}
.page-arrow {
    width: 7px;
    height: 11px;
}
.page-tab {
    width: 98px;
    border-right: 1px solid #c8c6c4;
    text-align: center;
    line-height: 44px;
}
.pagebar > .page-tab:nth-child(2) {
    width: 95px;
}
.page-active {
    position: relative;
    background-color: #fff;
    border-bottom: 5px solid #117865;
    font-weight: 600;
    padding-left: 22px;
    line-height: 43px;
    width: 98px;
}
.eye-off {
    position: absolute;
    left: 15px;
    top: 21px;
    width: 15px;
    height: 13px;
}
.page-close {
    position: absolute;
    right: 4px;
    top: -2px;
    line-height: 24px;
    font-size: 13px;
}
.page-add {
    width: 48px;
    height: 40px;
    margin-top: 2px;
    margin-left: -2px;
    background-color: #117865;
    color: #fff;
    font-size: 24px;
    font-weight: 700;
    text-align: center;
    line-height: 38px;
}

/* visualizations pane */
.viz-pane {
    width: 227px;
    border-left: 1px solid #e1dfdd;
    border-right: 1px solid #e1dfdd;
    background-color: #f3f2f1;
}
.pane-head {
    height: 48px;
    padding: 0 10px;
    margin-bottom: 2px;
    display: flex;
    align-items: center;
    justify-content: space-between;
    font-size: 18.500px;
    font-weight: 600;
    color: #252423;
}
.pane-chev {
    width: 15px;
    height: 15px;
    margin-top: 2px;
}
.viz-pane .pane-chev {
    margin-right: 2px;
    margin-left: -8px;
}
.build-label {
    font-size: 14px;
    font-weight: 600;
    letter-spacing: -.1px;
    line-height: 20px;
    margin: -2px 0 4px 10px;
    color: #323130;
}
.build-tabs {
    display: flex;
    align-items: center;
    padding-left: 10px;
}
.build-active {
    width: 40px;
    height: 40px;
    background-color: #c8c6c4;
    border-radius: 2px;
    display: flex;
    align-items: center;
    justify-content: center;
}
.build-format {
    width: 30px;
    height: 30px;
    margin-left: 47px;
}
.build-rule {
    position: relative;
    height: 16px;
    border-bottom: 1px solid #a19f9d;
}
.build-rule::after {
    content: "";
    position: absolute;
    left: 22px;
    bottom: -5px;
    width: 13px;
    height: 13px;
    background-color: #f3f2f1;
    border-left: 1px solid #a19f9d;
    border-top: 1px solid #a19f9d;
    transform: rotate(45deg);
    clip-path: polygon(0 0, 100% 0, 0 100%);
}
.viz-grid {
    display: grid;
    grid-template-columns: repeat(6, 35px);
    grid-auto-rows: 35px;
    justify-items: center;
    align-items: center;
    padding: 7px 0 0 8px;
}
.viz {
    width: 24px;
    height: 24px;
}
.viz-custom {
    width: 26px;
    height: 26px;
}
.ax {
    fill: none;
    stroke: #3b3a39;
    stroke-width: 1.300;
}
.bl {
    fill: #7db9ec;
    stroke: #1f7ac4;
}
.gr {
    fill: #c8c6c4;
    stroke: #8a8886;
}
.wh {
    fill: #fafafa;
    stroke: #3b3a39;
    stroke-width: 1.200;
}
.lineb {
    fill: none;
    stroke: #2b88d8;
    stroke-width: 1.300;
}
.lined {
    fill: none;
    stroke: #3b3a39;
    stroke-width: 1.200;
}
.viz-letter {
    font-weight: 700;
    color: #1f7fc4;
    line-height: 1;
}
.viz-r {
    font-size: 19px;
}
.viz-py {
    font-size: 21px;
    margin-top: -5px;
}
.viz-rule {
    margin: 2px 8px 0 8px;
    border-top: 1px dashed #d2d0ce;
}
.viz-rule + .viz-grid {
    padding-top: 3px;
}
.well {
    margin-top: 5px;
    border-top: 2px solid #e1dfdd;
    padding: 10px 7px 0 5px;
    font-size: 14.300px;
    letter-spacing: -.1px;
    color: #323130;
}
.well-title {
    line-height: 20px;
    padding-left: 10px;
}
.well-box {
    background-color: #fff;
    border: 1px dashed #c8c6c4;
    white-space: nowrap;
}
.well-values {
    height: 34px;
    line-height: 33px;
    margin-top: 7px;
    padding-left: 13px;
}
.well-tooltip {
    margin-top: 14px;
    font-weight: 600;
    color: #484644;
}
.keep-row {
    display: flex;
    align-items: center;
    justify-content: space-between;
    height: 24px;
    margin-top: 9px;
    padding-left: 10px;
}
.toggle {
    width: 40px;
    height: 20px;
    border-radius: 10px;
    background-color: #605e5c;
    color: #fff;
    font-size: 10px;
    line-height: 20px;
    padding-left: 6px;
    display: flex;
    align-items: center;
    justify-content: space-between;
    padding-right: 5px;
}
.toggle-knob {
    width: 11px;
    height: 11px;
    border-radius: 50%;
    background-color: #fff;
}
.well-drag {
    height: 32px;
    line-height: 31px;
    margin-top: 12px;
    padding-left: 10px;
}

/* data pane */
.data-pane {
    width: 225px;
    background-color: #f3f2f1;
}
.data-pane .pane-head {
    padding: 0 9px 0 10px;
}
.data-search {
    width: 215px;
    height: 33px;
    margin: 8px 0 0 5px;
    background-color: #fff;
    border: 1px solid #8a8886;
    border-radius: 2px;
    display: flex;
    align-items: center;
    padding-left: 9px;
    font-size: 16.500px;
    line-height: 30px;
    color: #605e5c;
}
.data-search span {
    padding-top: 1px;
}
.data-search-icon {
    width: 18px;
    height: 18px;
    margin-right: 7px;
    color: #323130;
}
.tree {
    padding: 11px 0 0 11px;
    font-size: 14px;
    letter-spacing: -.1px;
    color: #605e5c;
}
.tree-row {
    height: 30px;
    display: flex;
    align-items: center;
}
.tree-chev {
    width: 8px;
    height: 14px;
}
.tree-icon {
    width: 20px;
    height: 20px;
    margin: 0 5px 0 7px;
}
.tree-table {
    width: 17px;
    height: 15px;
    margin: 0 8px 0 8px;
}

/* status bar */
.statusbar {
    height: 29px;
    flex: none;
    border-top: 1px solid #e1dfdd;
    display: flex;
    align-items: center;
    justify-content: space-between;
    padding: 0 29px 0 6px;
    font-size: 14.300px;
    color: #605e5c;
    background-color: #f3f2f1;
}
.zoom {
    display: flex;
    align-items: center;
}
.zoom-sign {
    font-size: 16px;
    width: 16px;
    text-align: center;
}
.zoom-track {
    position: relative;
    width: 125px;
    height: 1px;
    margin: 0 4px;
    background-color: #605e5c;
}
.zoom-thumb {
    position: absolute;
    left: 60px;
    top: -7px;
    width: 5px;
    height: 14px;
    background-color: #605e5c;
}
.zoom-pct {
    margin-left: 15px;
    width: 38px;
    color: #8a8886;
}
.zoom-fit {
    width: 20px;
    height: 16px;
    margin-left: 18px;
}

/* windows taskbar */
.taskbar {
    height: 51px;
    flex: none;
    border-top: 1px solid #000;
    background: linear-gradient(90deg, #d9d8d4 0, #d3d7e1 30%, #d3d7e1 68%, #e2dfdc 72%, #dcdbda 85%, #d0d8e4 100%);
    display: flex;
    align-items: center;
    position: relative;
    color: #000;
}
.start {
    width: 62px;
    height: 50px;
    display: flex;
    align-items: center;
    justify-content: center;
    padding-right: 2px;
}
.task-search {
    width: 358px;
    height: 50px;
    border: 3px solid #b4b4b4;
    background-color: #fff;
    display: flex;
    align-items: center;
    padding-left: 11px;
    color: #323130;
}
.task-search-icon {
    width: 21px;
    height: 21px;
    margin-right: 13px;
    color: #000;
}
.task-search-text {
    font-size: 18px;
    width: 215px;
    white-space: nowrap;
}
.task-search-art {
    width: 100px;
    height: 44px;
    flex: none;
    background-color: #e8e8e8;
    overflow: hidden;
}
.taskview {
    width: 63px;
    display: flex;
    justify-content: center;
    padding-right: 4px;
}
.apps {
    display: flex;
}
.app {
    width: 62px;
    height: 50px;
    display: flex;
    align-items: center;
    justify-content: center;
    position: relative;
    padding-bottom: 3px;
}
.app-open::after {
    content: "";
    position: absolute;
    left: 5px;
    right: 6px;
    bottom: 0;
    height: 3px;
    background-color: #0078d4;
}
.app-active {
    background-color: #e8eaf0;
}
.app-active::after {
    left: 0;
    right: 0;
}
.app-icon {
    width: 32px;
    height: 32px;
}
.pbi-icon {
    width: 30px;
    height: 30px;
}
.app-badge {
    position: absolute;
    left: 32px;
    top: 24px;
    width: 21px;
    height: 21px;
    border-radius: 50%;
    border: 1px solid #484644;
    background-color: #c8c8cc;
    font-size: 14px;
    line-height: 19px;
    text-align: center;
}
.x-mark, .a-mark, .num-mark, .abc-mark, .p-mark, .w-mark {
    text-anchor: middle;
    font-family: "Open Sans", sans-serif;
}
.x-mark {
    font-size: 14px;
    font-weight: 700;
    fill: #fff;
}
.a-mark {
    font-size: 24px;
    fill: #2b88d8;
}
.num-mark {
    font-size: 10px;
    fill: #2b88d8;
}
.abc-mark {
    font-size: 11px;
    font-weight: 700;
    fill: #c8c6c4;
}
.p-mark {
    font-size: 11px;
    font-weight: 700;
    fill: #fff;
}
.w-mark {
    font-size: 13px;
    font-weight: 700;
    fill: #fff;
}
.tray {
    position: absolute;
    left: 1380px;
    top: 0;
    height: 50px;
    display: grid;
    grid-template-columns: 38px 119px 30px 30px 30px 30px 30px 30px 46px 90px 52px;
    align-items: center;
    justify-items: center;
    font-size: 14px;
    color: #201f1e;
}
.weather {
    width: 28px;
    height: 28px;
    margin-left: 5px;
}
.temp {
    justify-self: start;
    padding-left: 8px;
    display: flex;
    gap: 10px;
    font-size: 17px;
}
.tray-icon {
    width: 18px;
    height: 18px;
}
.tray-bt {
    width: 15px;
    height: 22px;
}
.tray-wide {
    width: 20px;
}
.tray-lang {
    font-size: 14.500px;
}
.clock {
    display: flex;
    flex-direction: column;
    align-items: center;
    line-height: 24px;
    font-size: 14.500px;
}
.tray-notify {
    width: 20px;
    height: 20px;
}
```
